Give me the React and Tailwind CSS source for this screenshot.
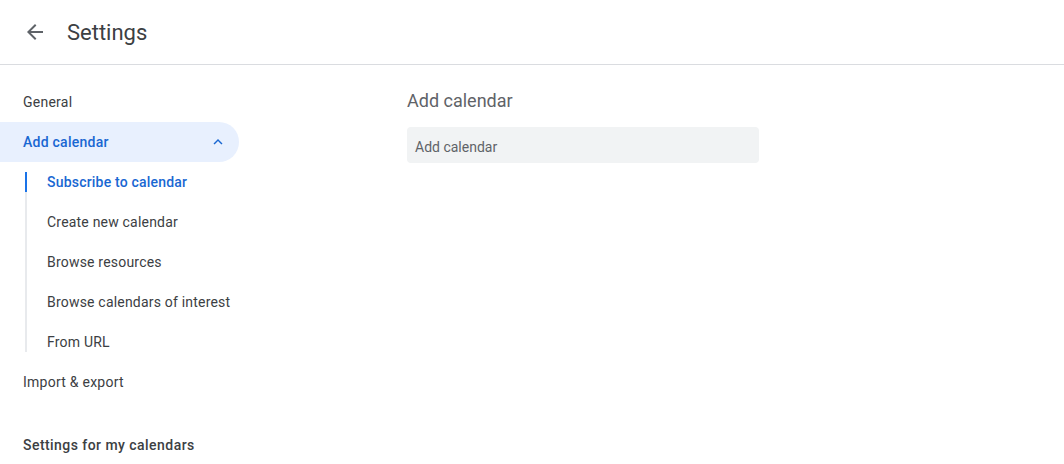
const Item = ({ children }) => (
    <div className="h-10 flex items-center pl-[23px] text-sm tracking-[0.25px] text-[#3c4043]">
        {children}
    </div>
)

const SubItem = ({ children, active }) => (
    <div className={`relative h-10 flex items-center pl-[20px] text-sm tracking-[0.2px] ${active ? 'text-[#1967d2] font-medium' : 'text-[#3c4043]'}`}>
        {active && <span className="absolute -left-[2px] top-[10px] h-5 w-[2px] bg-[#1a73e8]" />}
        {children}
    </div>
)

const App = () => {
    return (
        <div className="w-[1064px] h-[464px] overflow-hidden bg-white font-['Roboto',sans-serif]">
            <header className="h-[65px] flex items-center border-b border-[#dadce0]">
                <button className="w-12 h-12 ml-[11px] flex items-center justify-center text-[#5f6368]">
                    <svg width="24" height="24" viewBox="0 0 24 24" fill="currentColor">
                        <path d="M20 11H7.83l5.59-5.59L12 4l-8 8 8 8 1.41-1.41L7.83 13H20v-2z" />
                    </svg>
                </button>
                <h1 className="ml-2 text-[22px] text-[#3c4043]">Settings</h1>
            </header>
            <div className="flex">
                <nav className="w-[239px] pt-[17px] flex flex-col">
                    <Item>General</Item>
                    <div className="h-10 flex items-center justify-between pl-[23px] pr-[12px] bg-[#e8f0fe] rounded-r-full text-sm font-medium tracking-[0.25px] text-[#1967d2]">
                        Add calendar
                        <svg width="18" height="18" viewBox="0 0 24 24" fill="currentColor">
                            <path d="M7.41 15.41 12 10.83l4.59 4.58L18 14l-6-6-6 6z" />
                        </svg>
                    </div>
                    <div className="ml-[25px] my-[10px] flex flex-col border-l-2 border-[#e8eaed]">
                        <div className="-my-[10px]">
                            <SubItem active>Subscribe to calendar</SubItem>
                            <SubItem>Create new calendar</SubItem>
                            <SubItem>Browse resources</SubItem>
                            <SubItem>Browse calendars of interest</SubItem>
                            <SubItem>From URL</SubItem>
                        </div>
                    </div>
                    <Item>Import &amp; export</Item>
                    <div className="h-10 mt-[23px] flex items-center pl-[23px] text-sm font-medium tracking-[0.45px] text-[#3c4043]">
                        Settings for my calendars
                    </div>
                </nav>
                <main className="ml-[168px] pt-[24px]">
                    <h2 className="text-lg text-[#5f6368] leading-6">Add calendar</h2>
                    <div className="mt-[14px] w-[352px] h-9 bg-[#f1f3f4] rounded flex items-center px-2 pt-1 text-sm text-[#5f6368]">
                        Add calendar
                    </div>
                </main>
            </div>
        </div>
    )
}

export default App
